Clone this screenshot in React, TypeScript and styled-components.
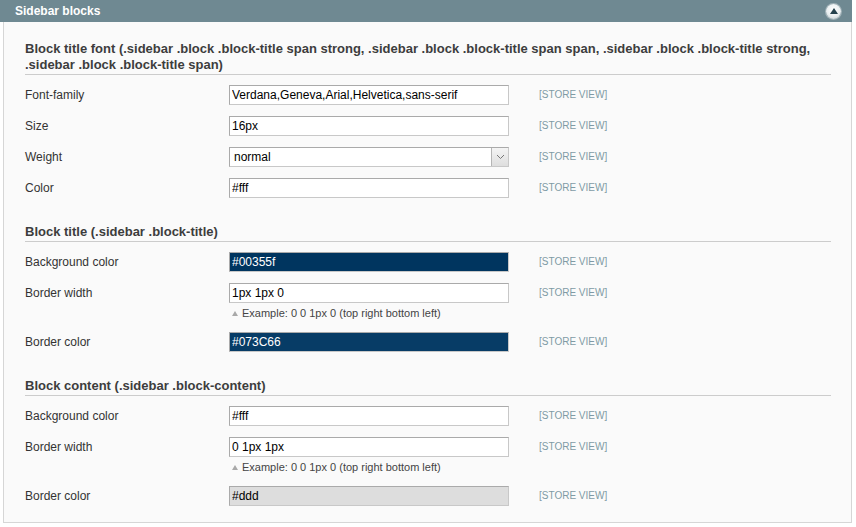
import React from 'react';
import styled, { createGlobalStyle } from 'styled-components';

const GlobalStyle = createGlobalStyle`
  body {
    margin: 0;
    background: #fff;
    font-family: Arial, "Liberation Sans", Helvetica, sans-serif;
    font-size: 12px;
    color: #2f2f2f;
  }
`;

type Field = {
  label: string;
  value: string;
  kind?: 'text' | 'select';
  bg?: string;
  color?: string;
  hint?: string;
};

type Section = { title: string; fields: Field[] };

const HINT = 'Example: 0 0 1px 0 (top right bottom left)';

const sections: Section[] = [
  {
    title:
      'Block title font (.sidebar .block .block-title span strong, .sidebar .block .block-title span span, .sidebar .block .block-title strong, .sidebar .block .block-title span)',
    fields: [
      { label: 'Font-family', value: 'Verdana,Geneva,Arial,Helvetica,sans-serif' },
      { label: 'Size', value: '16px' },
      { label: 'Weight', value: 'normal', kind: 'select' },
      { label: 'Color', value: '#fff' },
    ],
  },
  {
    title: 'Block title (.sidebar .block-title)',
    fields: [
      { label: 'Background color', value: '#00355f', bg: '#00355f', color: '#fff' },
      { label: 'Border width', value: '1px 1px 0', hint: HINT },
      { label: 'Border color', value: '#073C66', bg: '#073c66', color: '#fff' },
    ],
  },
  {
    title: 'Block content (.sidebar .block-content)',
    fields: [
      { label: 'Background color', value: '#fff' },
      { label: 'Border width', value: '0 1px 1px', hint: HINT },
      { label: 'Border color', value: '#ddd', bg: '#dddddd' },
    ],
  },
];

export default function App() {
  return (
    <>
      <GlobalStyle />
      <Panel>
        <Header>
          <HeaderTitle>Sidebar blocks</HeaderTitle>
          <Collapse>
            <svg width="8" height="6" viewBox="0 0 8 6">
              <path d="M4 0 L8 6 L0 6 Z" fill="#24414d" />
            </svg>
          </Collapse>
        </Header>
        <Body>
          {sections.map((s) => (
            <Fieldset key={s.title}>
              <Legend>{s.title}</Legend>
              {s.fields.map((f) => (
                <Row key={f.label} $hasHint={!!f.hint}>
                  <Label>{f.label}</Label>
                  <Value>
                    {f.kind === 'select' ? (
                      <Select>
                        <span>{f.value}</span>
                        <SelectArrow>
                          <svg width="9" height="6" viewBox="0 0 9 6">
                            <path d="M1 1 L4.5 4.5 L8 1" fill="none" stroke="#777" strokeWidth="1" />
                          </svg>
                        </SelectArrow>
                      </Select>
                    ) : (
                      <Input readOnly value={f.value} $bg={f.bg} $color={f.color} />
                    )}
                    {f.hint && (
                      <Hint>
                        <HintArrow />
                        {f.hint}
                      </Hint>
                    )}
                  </Value>
                  <Scope>[STORE VIEW]</Scope>
                </Row>
              ))}
            </Fieldset>
          ))}
        </Body>
      </Panel>
    </>
  );
}

const Panel = styled.div`
  width: 852px;
`;

const Header = styled.div`
  height: 22px;
  background: #6f8992;
  display: flex;
  align-items: center;
  justify-content: space-between;
  padding: 0 11px 0 15px;
  box-sizing: border-box;
`;

const HeaderTitle = styled.div`
  color: #fff;
  font-weight: bold;
  font-size: 12px;
`;

const Collapse = styled.div`
  width: 15px;
  height: 15px;
  border-radius: 50%;
  background: radial-gradient(circle at 50% 35%, #ffffff 0%, #e9eef0 55%, #b9c6cb 100%);
  box-shadow: 0 0 0 1px rgba(255, 255, 255, 0.35);
  display: flex;
  align-items: center;
  justify-content: center;
  svg {
    margin-top: -1px;
  }
`;

const Body = styled.div`
  margin-left: 3px;
  border: 1px solid #d6d6d6;
  border-top: none;
  background: #fafafa;
  padding: 19px 21px 16px 21px;
`;

const Fieldset = styled.div`
  & + & {
    margin-top: 26px;
  }
`;

const Legend = styled.div`
  font-size: 13px;
  font-weight: bold;
  line-height: 16px;
  color: #3d3d3d;
  border-bottom: 1px solid #cccccc;
  padding-bottom: 1px;
  margin-bottom: 10px;
  margin-right: -1px;
`;

const Row = styled.div<{ $hasHint: boolean }>`
  display: grid;
  grid-template-columns: 204px 280px auto;
  align-items: start;
  margin-bottom: ${(p) => (p.$hasHint ? '12px' : '11px')};
  &:last-child {
    margin-bottom: 0;
  }
`;

const Label = styled.div`
  line-height: 20px;
  font-size: 12px;
  color: #333;
`;

const Value = styled.div`
  display: flex;
  flex-direction: column;
`;

const Input = styled.input<{ $bg?: string; $color?: string }>`
  box-sizing: border-box;
  width: 280px;
  height: 20px;
  margin: 0;
  padding: 0 2px;
  border: 1px solid;
  border-color: #aaaaaa #c8c8c8 #c8c8c8 #aaaaaa;
  background: ${(p) => p.$bg || '#fff'};
  color: ${(p) => p.$color || '#000'};
  font-family: Arial, "Liberation Sans", sans-serif;
  font-size: 12px;
  outline: none;
`;

const Select = styled.div`
  box-sizing: border-box;
  width: 280px;
  height: 20px;
  border: 1px solid;
  border-color: #aaaaaa #c8c8c8 #c8c8c8 #aaaaaa;
  background: #fff;
  display: flex;
  align-items: center;
  justify-content: space-between;
  padding-left: 4px;
  font-size: 12px;
  color: #000;
`;

const SelectArrow = styled.div`
  width: 17px;
  height: 18px;
  box-sizing: border-box;
  border-left: 1px solid #b5b5b5;
  background: linear-gradient(#f4f4f4, #dedede);
  display: flex;
  align-items: center;
  justify-content: center;
`;

const Hint = styled.div`
  margin-top: 3px;
  line-height: 14px;
  font-size: 11px;
  color: #444;
  display: flex;
  align-items: center;
  padding-left: 3px;
`;

const HintArrow = styled.span`
  width: 0;
  height: 0;
  border-left: 3px solid transparent;
  border-right: 3px solid transparent;
  border-bottom: 5px solid #a9a9a9;
  margin-right: 4px;
`;

const Scope = styled.div`
  padding-left: 30px;
  line-height: 20px;
  font-size: 10px;
  color: #7f9aa5;
`;
